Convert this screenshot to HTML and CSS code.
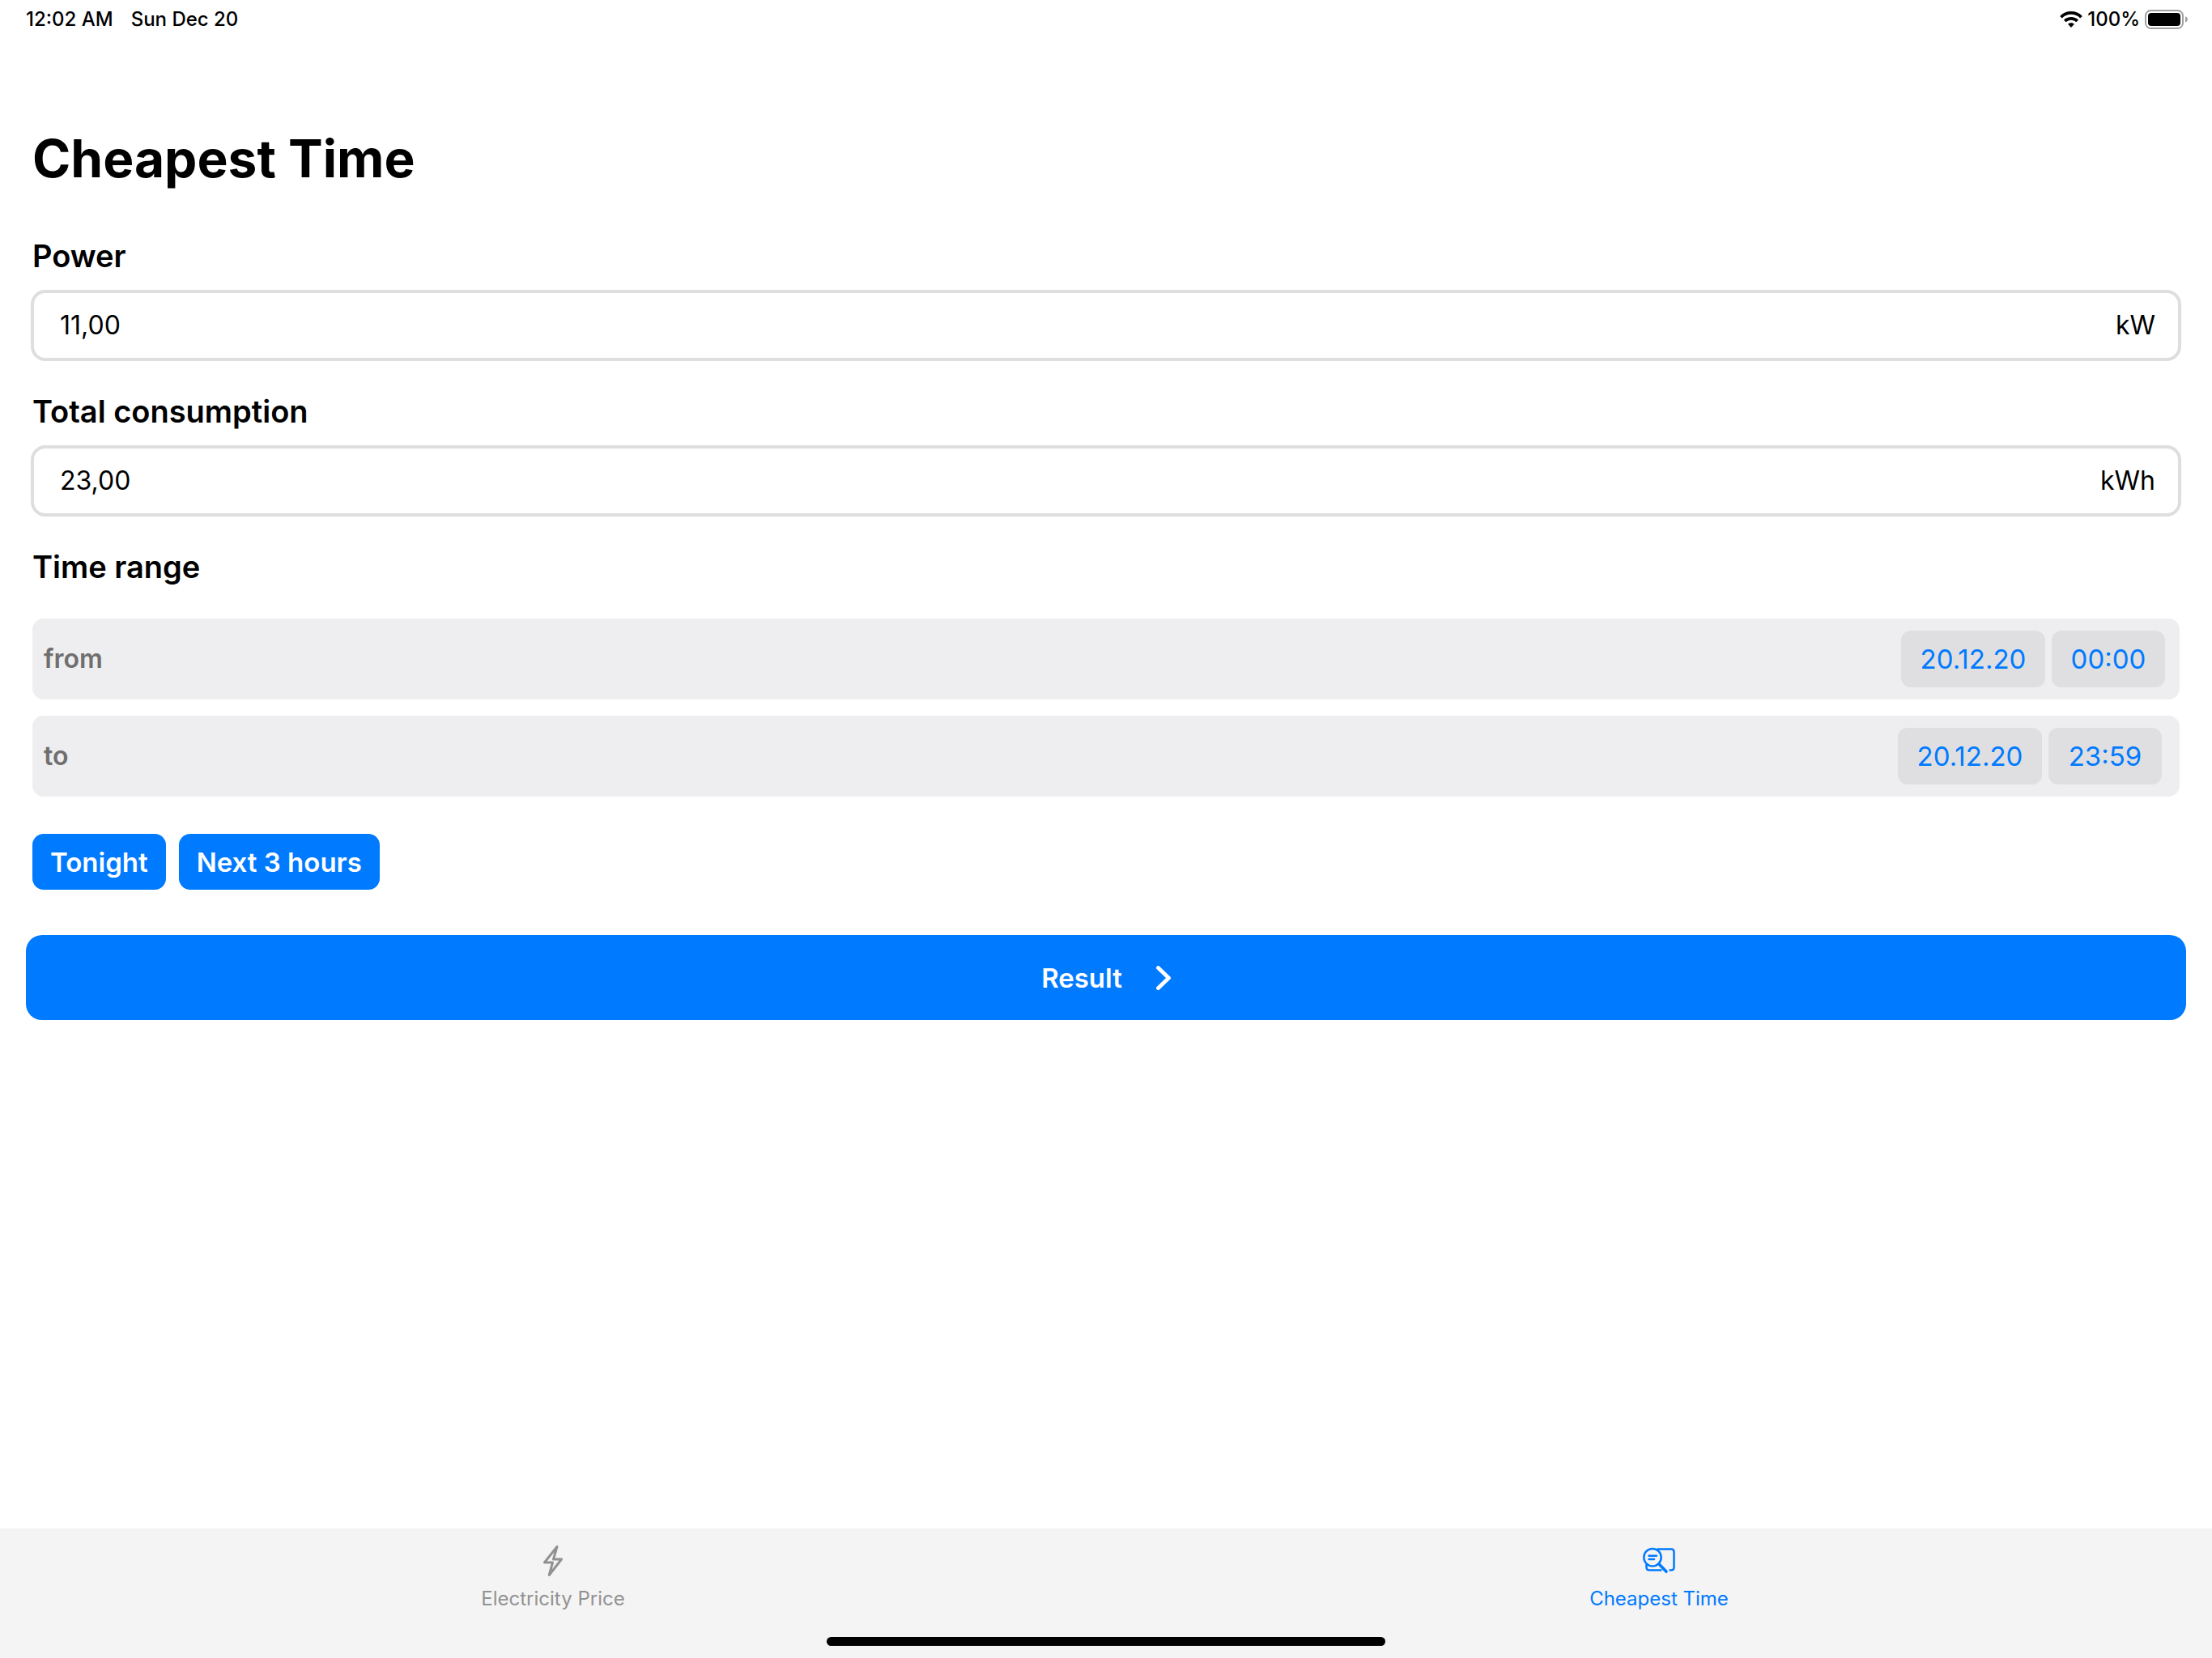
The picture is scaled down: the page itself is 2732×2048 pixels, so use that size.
FILE: index.html
```
<!DOCTYPE html>
<html lang="en">
<head>
<meta charset="utf-8">
<meta name="viewport" content="width=device-width, initial-scale=1">
<title>Cheapest Time</title>
<link rel="stylesheet" href="styles.css">
</head>
<body>
<header class="status">
  <span class="status-side"><span>12:02 AM</span><span>Sun Dec 20</span></span>
  <span class="status-power">
    <svg class="wifi" viewBox="0 0 28 20" aria-hidden="true">
      <path d="M1.500 7.200C8.200.200 19.800.200 26.500 7.200" fill="none" stroke="currentColor" stroke-width="3.800"/>
      <path d="M6.300 12C10.500 7.800 17.500 7.800 21.700 12" fill="none" stroke="currentColor" stroke-width="3.800"/>
      <path d="M10 15.800C12.200 13.600 15.800 13.600 18 15.800L14 20Z" fill="currentColor"/>
    </svg>
    <span>100%</span>
    <svg class="battery" viewBox="0 0 54 24" aria-hidden="true">
      <rect x="1" y="1" width="46" height="22" rx="6.500" fill="none" stroke="#a0a0a0" stroke-width="2"/>
      <rect x="4" y="4" width="40" height="16" rx="4" fill="#000"/>
      <path d="M50 8Q53 9.500 53 12T50 16Z" fill="#a0a0a0"/>
    </svg>
  </span>
</header>

<main class="page">
  <h1 class="title">Cheapest Time</h1>
  <form class="form">
    <label class="heading" for="power">Power</label>
    <div class="field">
      <input class="field-input" id="power" type="text" inputmode="decimal" value="11,00">
      <span class="unit">kW</span>
    </div>

    <label class="heading" for="consumption">Total consumption</label>
    <div class="field">
      <input class="field-input" id="consumption" type="text" inputmode="decimal" value="23,00">
      <span class="unit">kWh</span>
    </div>

    <h2 class="heading">Time range</h2>
    <div class="ranges">
      <div class="range" role="group" aria-labelledby="from">
        <span class="range-name" id="from">from</span>
        <button class="pill pill-date" type="button">20.12.20</button>
        <button class="pill pill-time" type="button">00:00</button>
      </div>
      <div class="range range-end" role="group" aria-labelledby="to">
        <span class="range-name" id="to">to</span>
        <button class="pill pill-date" type="button">20.12.20</button>
        <button class="pill pill-time" type="button">23:59</button>
      </div>
    </div>

    <div class="presets">
      <button class="preset" type="button">Tonight</button>
      <button class="preset" type="button">Next 3 hours</button>
    </div>

    <button class="result" type="button">
      <span>Result</span>
      <svg class="chevron" viewBox="0 0 18 30" aria-hidden="true">
        <path d="M2.500 2.500L15.500 15L2.500 27.500" fill="none" stroke="currentColor" stroke-width="4.800" stroke-linecap="round" stroke-linejoin="round"/>
      </svg>
    </button>
  </form>
</main>

<nav class="tabs">
  <a class="tab" href="#price">
    <svg class="tab-icon" viewBox="0 0 40 40" aria-hidden="true">
      <path d="M25 2.500L9.500 22H19.500L15.300 37.500L30.500 18H20.500Z" fill="none" stroke="currentColor" stroke-width="3" stroke-linejoin="round"/>
    </svg>
    <span>Electricity Price</span>
  </a>
  <a class="tab tab-active" href="#cheapest" aria-current="page">
    <svg class="tab-icon" viewBox="0 0 40 40" aria-hidden="true">
      <g fill="none" stroke="currentColor" stroke-width="2.500" stroke-linecap="round">
        <circle cx="12" cy="15.700" r="10.700"/>
        <path d="M7.500 13.700H17M7.500 18H14"/>
        <path d="M17.500 5.500H35Q38.500 5.500 38.500 9V28Q38.500 31.500 35 31.500H32.500" stroke-linecap="butt"/>
        <path d="M4.500 24V28Q4.500 31.500 8 31.500H23.500" stroke-linecap="butt"/>
        <path d="M20 24L29 33.300" stroke-width="3.600"/>
      </g>
    </svg>
    <span>Cheapest Time</span>
  </a>
  <div class="home-bar"></div>
</nav>
</body>
</html>
```
FILE: styles.css
```
* {
  box-sizing: border-box;
}

body {
  display: flex;
  flex-direction: column;
  min-height: 100vh;
  margin: 0;
  background: #fff;
  color: #000;
  font-family: Inter, "Liberation Sans", sans-serif;
  font-size: 32px;
  line-height: 40px;
}

button,
input {
  margin: 0;
  border: 0;
  font: inherit;
}

.status {
  display: flex;
  justify-content: space-between;
  align-items: center;
  height: 48px;
  padding: 0 29px 0 32px;
  font-size: 24px;
  font-weight: 500;
  line-height: 28px;
}

.status-side {
  display: flex;
  gap: 22px;
}

.status-power {
  display: flex;
  align-items: center;
  gap: 6px;
}

.wifi {
  width: 28px;
  height: 20px;
}

.battery {
  width: 54px;
  height: 24px;
}

.page {
  flex: 1;
  padding: 108px 32px 40px;
}

.title {
  margin: 0 8px 56px;
  font-size: 64px;
  font-weight: 700;
  line-height: 80px;
}

.form {
  display: flex;
  flex-direction: column;
}

.heading {
  margin: 0 8px 18px;
  font-size: 38px;
  font-weight: 600;
  line-height: 48px;
}

.field {
  display: flex;
  align-items: center;
  height: 88px;
  margin: 0 6px 38px;
  padding: 0 28px 0 32px;
  border: 4px solid #dedede;
  border-radius: 18px;
}

.field-input {
  flex: 1;
  min-width: 0;
  padding: 0;
  background: none;
  color: inherit;
  outline: none;
}

.ranges {
  display: flex;
  flex-direction: column;
  gap: 20px;
  margin: 22px 8px 0;
}

.range {
  display: flex;
  align-items: center;
  gap: 8px;
  height: 100px;
  padding: 0 18px 0 14px;
  border-radius: 14px;
  background: #eeeef0;
}

.range-end {
  padding-right: 22px;
}

.range-name {
  flex: 1;
  color: #6f6f6f;
  font-weight: 600;
}

.pill {
  height: 70px;
  padding: 0;
  border-radius: 12px;
  background: #dfdfe1;
  color: #007aff;
  font-size: 33px;
}

.pill-date {
  width: 178px;
}

.pill-time {
  width: 140px;
}

.presets {
  display: flex;
  gap: 16px;
  margin: 46px 8px 56px;
}

.preset {
  height: 69px;
  padding: 0 22px;
  border-radius: 14px;
  background: #007aff;
  color: #fff;
  font-size: 33px;
  font-weight: 600;
}

.result {
  display: flex;
  justify-content: center;
  align-items: center;
  gap: 42px;
  height: 105px;
  border-radius: 20px;
  background: #007aff;
  color: #fff;
  font-size: 33px;
  font-weight: 600;
}

.chevron {
  width: 18px;
  height: 30px;
}

.tabs {
  display: grid;
  grid-template-columns: 1fr 1fr;
  align-content: space-between;
  padding: 20px 0 15px;
  height: 160px;
  background: #f4f4f4;
}

.tab {
  display: flex;
  flex-direction: column;
  align-items: center;
  gap: 13px;
  color: #929292;
  font-size: 24px;
  line-height: 28px;
  text-decoration: none;
}

.tab-active {
  color: #007aff;
}

.tab-icon {
  width: 40px;
  height: 40px;
}

.home-bar {
  grid-column: 1 / -1;
  justify-self: center;
  width: 690px;
  max-width: 50%;
  height: 11px;
  border-radius: 6px;
  background: #000;
}
```
